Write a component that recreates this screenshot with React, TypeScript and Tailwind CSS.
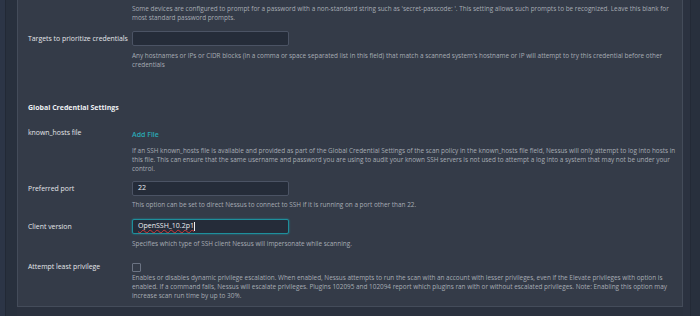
import React from "react";

const desc = "text-[6.4px] leading-[9px] text-[#a7acb4]";
const label = "w-[104px] shrink-0 text-[6.9px] leading-[9px] text-[#e4e6ea]";
const input =
  "w-[157px] h-[15px] rounded-[2px] bg-[#252c39] border border-[#4b5364] px-[5px] flex items-center text-[7px] text-[#eceef1]";
const descWrap = "pl-[104px] w-[646px]";

export default function App() {
  return (
    <div
      className="w-[700px] h-[316px] overflow-hidden bg-[#2a313e] flex"
      style={{ fontFamily: '"Open Sans", "Noto Sans", sans-serif' }}
    >
      {/* left sidebar edge */}
      <div className="w-[6px] h-full bg-[#2c3546] border-r border-[#222935]" />
      <div className="w-[11px] h-full bg-[#28303d]" />

      {/* main panel */}
      <div className="w-[666px] h-[307px] bg-[#343b48] border-x border-b border-[#444c5a] pl-[10px] pt-[4px]">
        <div className={descWrap}>
          <p className={desc}>
            Some devices are configured to prompt for a password with a non-standard string such as 'secret-passcode: '. This setting allows such prompts to be recognized. Leave this blank for most standard password prompts.
          </p>
        </div>

        <div className="mt-[9px] flex items-center">
          <div className={label}>Targets to prioritize credentials</div>
          <div className={input}></div>
        </div>
        <div className={descWrap + " mt-[5px]"}>
          <p className={desc}>
            Any hostnames or IPs or CIDR blocks (in a comma or space separated list in this field) that match a scanned system's hostname or IP will attempt to try this credential before other credentials
          </p>
        </div>

        <div className="mt-[34px] text-[7px] leading-[9px] font-bold text-[#eef0f3]">
          Global Credential Settings
        </div>

        <div className="mt-[16px] flex items-start">
          <div className={label}>known_hosts file</div>
          <div className="mt-[2px] text-[7px] leading-[9px] font-semibold text-[#2aaab6]">Add File</div>
        </div>
        <div className="pl-[104px] w-[654px] mt-[7px]">
          <p className={desc + " whitespace-nowrap"}>
            If an SSH known_hosts file is available and provided as part of the Global Credential Settings of the scan policy in the known_hosts file field, Nessus will only attempt to log into hosts in
            <br />
            this file. This can ensure that the same username and password you are using to audit your known SSH servers is not used to attempt a log into a system that may not be under your
            <br />
            control.
          </p>
        </div>

        <div className="mt-[8px] flex items-center">
          <div className={label}>Preferred port</div>
          <div className={input}>22</div>
        </div>
        <div className={descWrap + " mt-[4px]"}>
          <p className={desc}>
            This option can be set to direct Nessus to connect to SSH if it is running on a port other than 22.
          </p>
        </div>

        <div className="mt-[10px] flex items-center">
          <div className={label}>Client version</div>
          <div className={input + " !border-[#1e8f9c] shadow-[0_0_2px_#1e8f9c]"}>
            <span className="underline decoration-wavy decoration-[#d23a3a] decoration-[0.5px] underline-offset-[1px]">OpenSSH_10.2p1</span>
            <span className="w-px h-[9px] bg-[#eceef1]" />
          </div>
        </div>
        <div className={descWrap + " mt-[5px]"}>
          <p className={desc}>
            Specifies which type of SSH client Nessus will impersonate while scanning.
          </p>
        </div>

        <div className="mt-[14px] flex items-start">
          <div className={label}>Attempt least privilege</div>
          <div className="mt-[1px] w-[9px] h-[9px] rounded-[1px] border border-[#6b7383]" />
        </div>
        <div className={descWrap + " mt-[1px]"}>
          <p className={desc}>
            Enables or disables dynamic privilege escalation. When enabled, Nessus attempts to run the scan with an account with lesser privileges, even if the Elevate privileges with option is enabled. If a command fails, Nessus will escalate privileges. Plugins 102095 and 102094 report which plugins ran with or without escalated privileges. Note: Enabling this option may increase scan run time by up to 30%.
          </p>
        </div>
      </div>

      {/* right edge */}
      <div className="w-[8px] h-full bg-[#2b3240] border-r border-[#232a36]" />
      <div className="flex-1 h-full bg-[#28303d]" />
    </div>
  );
}
